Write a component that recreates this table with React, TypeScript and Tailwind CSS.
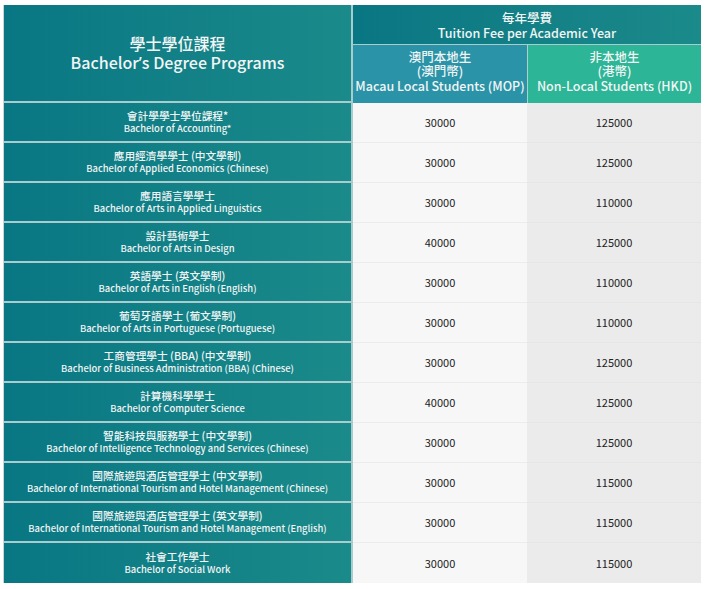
import React from "react";

const rows: [string, string, string, string][] = [
  ["會計學學士學位課程*", "Bachelor of Accounting*", "30000", "125000"],
  ["應用經濟學學士 (中文學制)", "Bachelor of Applied Economics (Chinese)", "30000", "125000"],
  ["應用語言學學士", "Bachelor of Arts in Applied Linguistics", "30000", "110000"],
  ["設計藝術學士", "Bachelor of Arts in Design", "40000", "125000"],
  ["英語學士 (英文學制)", "Bachelor of Arts in English (English)", "30000", "110000"],
  ["葡萄牙語學士 (葡文學制)", "Bachelor of Arts in Portuguese (Portuguese)", "30000", "110000"],
  ["工商管理學士 (BBA) (中文學制)", "Bachelor of Business Administration (BBA) (Chinese)", "30000", "125000"],
  ["計算機科學學士", "Bachelor of Computer Science", "40000", "125000"],
  ["智能科技與服務學士 (中文學制)", "Bachelor of Intelligence Technology and Services (Chinese)", "30000", "125000"],
  ["國際旅遊與酒店管理學士 (中文學制)", "Bachelor of International Tourism and Hotel Management (Chinese)", "30000", "115000"],
  ["國際旅遊與酒店管理學士 (英文學制)", "Bachelor of International Tourism and Hotel Management (English)", "30000", "115000"],
  ["社會工作學士", "Bachelor of Social Work", "30000", "115000"],
];

export default function App() {
  return (
    <div
      className="bg-white w-[705px] h-[589px] pl-[3px] pt-[5px]"
      style={{ fontFamily: '"Noto Sans CJK TC", "Noto Sans", sans-serif' }}
    >
      <div className="w-[698px] flex flex-col border-l border-[#c8d4d6]">
        {/* header */}
        <div className="flex h-[96px]">
          <div className="w-[347px] bg-gradient-to-r from-[#097783] to-[#1a8a8a] flex flex-col items-center justify-center text-[#f2f5f5] font-medium text-[16px] leading-[19px]">
            <div>學士學位課程</div>
            <div>
              Bachelor<span className="font-['Noto_Sans']">’</span>s Degree Programs
            </div>
          </div>
          <div className="w-[2px] bg-[#a9cccf]" />
          <div className="flex-1 flex flex-col">
            <div className="h-[39px] bg-gradient-to-r from-[#097683] to-[#1b8a8a] flex flex-col items-center justify-center text-[#f2f5f5] font-medium text-[12.5px] leading-[15px]">
              <div>每年學費</div>
              <div>Tuition Fee per Academic Year</div>
            </div>
            <div className="h-[1px] bg-[#a9cccf]" />
            <div className="flex-1 flex">
              <div className="w-[174px] bg-[#2a93a7] flex flex-col items-center justify-center pb-[3px] text-[#f2f5f5] font-medium text-[12.5px] leading-[14.5px]">
                <div>澳門本地生</div>
                <div>(澳門幣)</div>
                <div>Macau Local Students (MOP)</div>
              </div>
              <div className="w-[1px] bg-[#a9d2cc]" />
              <div className="flex-1 bg-[#2cb596] flex flex-col items-center justify-center pb-[3px] text-[#f2f5f5] font-medium text-[12.5px] leading-[14.5px]">
                <div>非本地生</div>
                <div>(港幣)</div>
                <div>Non-Local Students (HKD)</div>
              </div>
            </div>
          </div>
        </div>
        <div className="h-[2px] flex">
          <div className="w-[347px] bg-[#a9cccf]" />
          <div className="w-[2px] bg-[#a9cccf]" />
          <div className="w-[174px] bg-[#2a93a7]" />
          <div className="w-[1px] bg-[#a9d2cc]" />
          <div className="flex-1 bg-[#2cb596]" />
        </div>
        {/* body */}
        {rows.map((r, i) => (
          <div key={i} className="flex h-[40px]">
            <div
              className={
                "w-[347px] bg-gradient-to-r from-[#097783] to-[#1a8a8a] flex flex-col items-center justify-center pb-[1px] text-[#f2f5f5] font-medium " +
                (i < rows.length - 1 ? "border-b-2 border-[#a9cccf]" : "")
              }
            >
              <div className="text-[10.7px] leading-[13px]">{r[0]}</div>
              <div className="text-[9.4px] leading-[13px]">{r[1]}</div>
            </div>
            <div className="w-[2px] bg-[#a9cccf]" />
            <div
              className={
                "w-[174px] bg-[#f7f7f7] flex items-center justify-center text-[11px] text-[#222222] " +
                (i < rows.length - 1 ? "border-b border-[#ececec]" : "")
              }
            >
              {r[2]}
            </div>
            <div
              className={
                "flex-1 bg-[#ebebeb] flex items-center justify-center text-[11px] text-[#222222] " +
                (i < rows.length - 1 ? "border-b border-[#e6e6e6]" : "")
              }
            >
              {r[3]}
            </div>
          </div>
        ))}
      </div>
    </div>
  );
}
